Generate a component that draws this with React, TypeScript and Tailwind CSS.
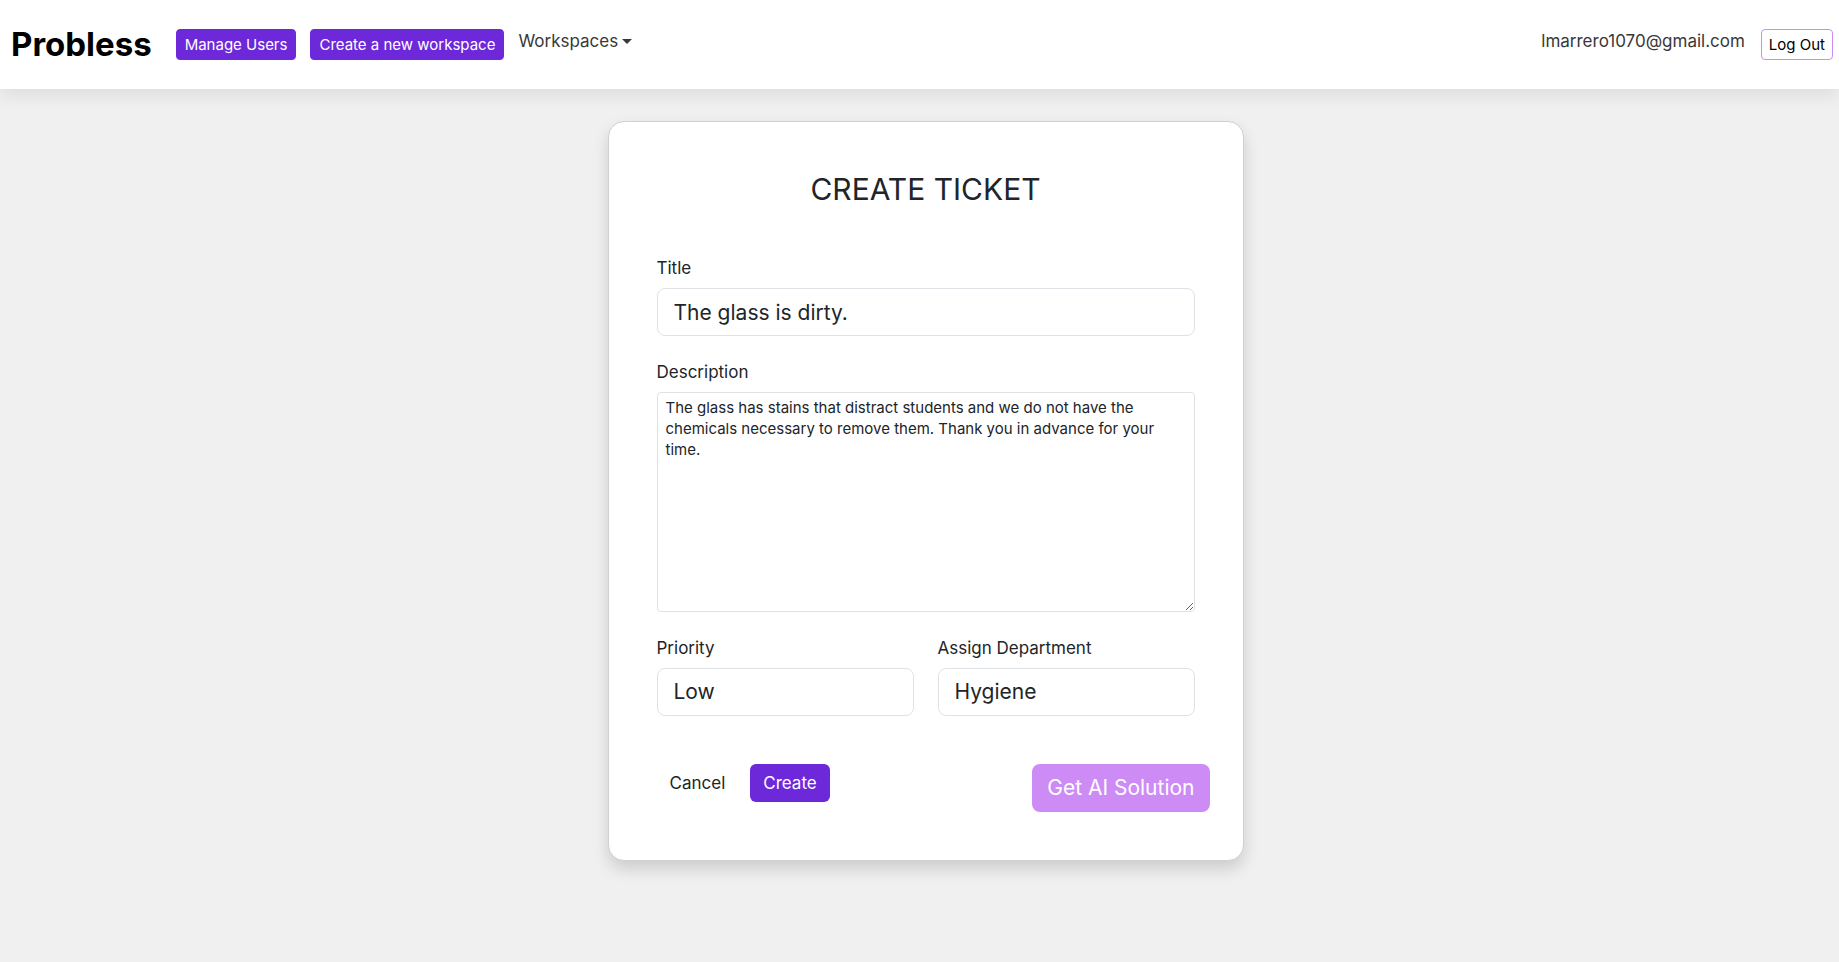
import { useState } from "react";

const fieldClass =
  "block h-12 w-full appearance-none rounded-lg border border-[#dee2e6] bg-white px-4 text-[21px] leading-7 text-[#212529] outline-none";

const navButtonClass =
  "h-[31px] rounded border border-[#6d28d9] bg-[#6d28d9] px-2 text-[15px] leading-5 text-white";

function NavBar() {
  return (
    <header className="relative flex min-h-[89px] items-start justify-between bg-white pr-1.5 pl-[11px] pt-[29px] shadow-[0_8px_16px_rgba(0,0,0,0.07)]">
      <nav className="flex items-start gap-[14px]">
        <a href="#" className="mr-2.5 text-[33px] leading-[31px] font-bold text-black">
          Probless
        </a>
        <button type="button" className={navButtonClass}>
          Manage Users
        </button>
        <button type="button" className={navButtonClass}>
          Create a new workspace
        </button>
        <button type="button" className="flex items-center gap-1 text-[17px] leading-6 text-[#383838]">
          Workspaces
          <span className="border-x-[5px] border-t-[5px] border-x-transparent border-t-[#383838]" />
        </button>
      </nav>
      <div className="flex items-start gap-4">
        <span className="text-[17px] leading-6 text-[#383838]">lmarrero1070@gmail.com</span>
        <button
          type="button"
          className="h-[31px] rounded border border-[#cd8bf5] bg-white px-[7px] text-[15px] leading-5 text-black"
        >
          Log Out
        </button>
      </div>
    </header>
  );
}

function TicketForm() {
  const [title, setTitle] = useState("The glass is dirty.");
  const [description, setDescription] = useState(
    "The glass has stains that distract students and we do not have the chemicals necessary to remove them. Thank you in advance for your time."
  );

  return (
    <form
      onSubmit={(event) => event.preventDefault()}
      className="mx-auto w-full max-w-[636px] rounded-2xl border border-[#d0d0d0] bg-white p-12 text-[17px] leading-6 shadow-[0_8px_16px_rgba(0,0,0,0.15)]"
    >
      <h1 className="mb-12 text-center text-[30px] leading-[38px]">CREATE TICKET</h1>

      <div className="mb-6">
        <label htmlFor="title" className="mb-2 block">
          Title
        </label>
        <input
          id="title"
          type="text"
          value={title}
          onChange={(event) => setTitle(event.target.value)}
          className={fieldClass}
        />
      </div>

      <div className="mb-6">
        <label htmlFor="description" className="mb-2 block">
          Description
        </label>
        <textarea
          id="description"
          value={description}
          onChange={(event) => setDescription(event.target.value)}
          className="block h-[220px] w-full resize-y rounded border border-[#dee2e6] bg-white px-2 py-1 text-[15px] leading-[21px] text-[#212529] outline-none"
        />
      </div>

      <div className="mb-12 grid grid-cols-2 gap-6">
        <div>
          <label htmlFor="priority" className="mb-2 block">
            Priority
          </label>
          <select id="priority" defaultValue="Low" className={fieldClass}>
            <option>Low</option>
            <option>Medium</option>
            <option>High</option>
          </select>
        </div>
        <div>
          <label htmlFor="department" className="mb-2 block">
            Assign Department
          </label>
          <select id="department" defaultValue="Hygiene" className={fieldClass}>
            <option>Hygiene</option>
          </select>
        </div>
      </div>

      <div className="-mr-[15px] flex items-start justify-between">
        <div className="flex gap-3">
          <button type="button" className="h-[38px] rounded-md px-[13px]">
            Cancel
          </button>
          <button type="submit" className="h-[38px] rounded-md bg-[#6d28d9] px-[13px] text-white">
            Create
          </button>
        </div>
        <button type="button" className="h-12 rounded-lg bg-[#cd8bf5] px-[15px] text-[21px] text-white">
          Get AI Solution
        </button>
      </div>
    </form>
  );
}

export default function App() {
  return (
    <div className="min-h-screen bg-[#f0f0f0] font-['Inter',sans-serif] text-[#212529]">
      <NavBar />
      <main className="py-8 pl-3">
        <TicketForm />
      </main>
    </div>
  );
}
